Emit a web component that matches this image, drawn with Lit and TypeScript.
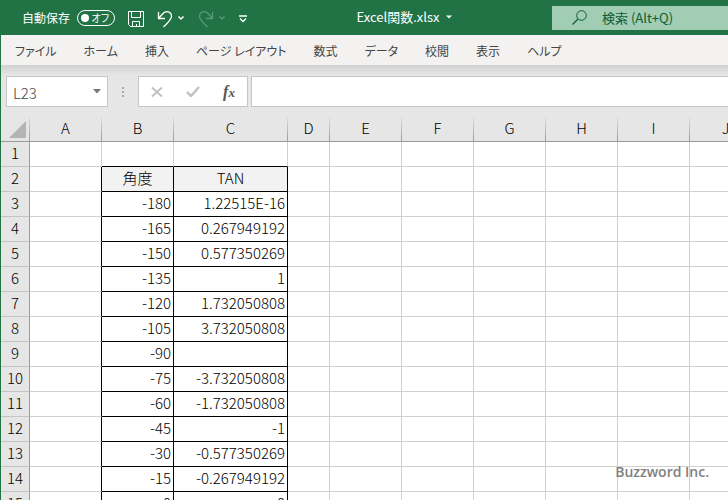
import { LitElement, html, css, nothing } from "lit";
import { customElement } from "lit/decorators.js";
import { classMap } from "lit/directives/class-map.js";

const MENU = ["ファイル", "ホーム", "挿入", "ページ レイアウト", "数式", "データ", "校閲", "表示", "ヘルプ"];
const COLUMNS = ["A", "B", "C", "D", "E", "F", "G", "H", "I", "J"];
const ROWS: [string, string][] = [
  ["", ""],
  ["角度", "TAN"],
  ["-180", "1.22515E-16"],
  ["-165", "0.267949192"],
  ["-150", "0.577350269"],
  ["-135", "1"],
  ["-120", "1.732050808"],
  ["-105", "3.732050808"],
  ["-90", ""],
  ["-75", "-3.732050808"],
  ["-60", "-1.732050808"],
  ["-45", "-1"],
  ["-30", "-0.577350269"],
  ["-15", "-0.267949192"],
  ["0", "0"],
];

const base = css`
  * {
    box-sizing: border-box;
  }
  button,
  input {
    margin: 0;
    padding: 0;
    border: 0;
    background: none;
    color: inherit;
    font: inherit;
    outline: none;
  }
  button {
    display: flex;
    align-items: center;
    justify-content: center;
  }
  svg {
    display: block;
    fill: none;
    stroke: currentColor;
  }
`;

@customElement("title-bar")
class TitleBar extends LitElement {
  static styles = [
    base,
    css`
      :host {
        display: grid;
        grid-template-columns: 256px 1fr 176px;
        align-items: center;
        height: 35px;
        background: #217346;
        color: #fff;
        font-size: 12px;
      }
      .tools {
        display: flex;
        align-items: center;
        padding-left: 22px;
      }
      .tools button {
        padding-top: 2px;
      }
      .autosave {
        display: flex;
        align-items: center;
        gap: 7px;
        margin-right: 13px;
      }
      .pill {
        position: relative;
        display: flex;
        align-items: center;
        justify-content: flex-end;
        width: 38px;
        height: 16px;
        padding-right: 5px;
        border: 1px solid #fff;
        border-radius: 8px;
        font-size: 10px;
        font-feature-settings: "palt";
      }
      .switch {
        position: absolute;
        left: 3px;
        top: 3px;
        width: 8px;
        height: 8px;
        appearance: none;
        border-radius: 4px;
        background: #fff;
      }
      .save,
      .undo,
      .redo {
        margin-right: 13px;
      }
      .redo {
        color: #559a73;
      }
      .name {
        justify-self: center;
        gap: 6px;
        padding-bottom: 2px;
        font-size: 13px;
      }
      .search {
        display: flex;
        align-items: center;
        gap: 15px;
        height: 24px;
        padding-left: 20px;
        background: #a0cdb4;
        color: #0f5c33;
        font-size: 13px;
      }
      .search input {
        flex: 1;
        min-width: 0;
      }
      .search input::placeholder {
        color: inherit;
        opacity: 1;
      }
    `,
  ];

  render() {
    return html`
      <div class="tools">
        <label class="autosave">
          自動保存
          <span class="pill"><input class="switch" type="checkbox" role="switch" />オフ</span>
        </label>
        <button class="save" aria-label="上書き保存">
          <svg width="16" height="16" viewBox="0 0 16 16">
            <path d="M.5.5h15v15h-13l-2-2zM3.500.5v6h9v-6M4.500 15.500v-5h7v5M8.500 13v2.500" />
          </svg>
        </button>
        <button class="undo" aria-label="元に戻す">
          <svg width="28" height="18" viewBox="0 0 28 18">
            <path d="M1.500 2v6.500H8M1.500 8.500 5 4.500C9-.5 14.500 2 14.500 6.500c0 3-2 4.500-8 10.500" stroke-width="1.300" />
            <path d="M21.500 6.500 24 9l2.500-2.500" stroke-width="1.500" />
          </svg>
        </button>
        <button class="redo" aria-label="やり直し">
          <svg width="28" height="18" viewBox="0 0 28 18">
            <path d="M14.500 2v6.500H8M14.500 8.500 11 4.500C7-.5 1.500 2 1.500 6.500c0 3 2 4.500 8 10.500" stroke-width="1.300" />
            <path d="M21.500 6.500 24 9l2.500-2.500" stroke-width="1.500" />
          </svg>
        </button>
        <button aria-label="クイック アクセス ツール バーのユーザー設定">
          <svg width="8" height="8" viewBox="0 0 8 8">
            <path d="M0 1h8M1 3.500 4 6.500l3-3" stroke-width="1.300" />
          </svg>
        </button>
      </div>
      <button class="name">
        Excel関数.xlsx
        <svg width="6" height="4" viewBox="0 0 6 4"><path d="M0 .5h6L3 3.500z" fill="currentColor" stroke="none" /></svg>
      </button>
      <label class="search">
        <svg width="15" height="15" viewBox="0 0 15 15">
          <circle cx="9.500" cy="5.500" r="4.800" />
          <path d="M6 9 .5 14.500" stroke-width="1.200" />
        </svg>
        <input type="text" aria-label="検索" placeholder="検索 (Alt+Q)" />
      </label>
    `;
  }
}

@customElement("ribbon-tabs")
class RibbonTabs extends LitElement {
  static styles = [
    base,
    css`
      :host {
        display: block;
        background: #f3f2f1;
        color: #444;
      }
      .tabs {
        display: flex;
        gap: 27px;
        height: 30px;
        padding-left: 14px;
        font-size: 12px;
        font-feature-settings: "palt";
      }
      button {
        flex: none;
        white-space: nowrap;
      }
    `,
  ];

  render() {
    return html`<nav class="tabs">${MENU.map((label) => html`<button>${label}</button>`)}</nav>`;
  }
}

@customElement("formula-bar")
class FormulaBar extends LitElement {
  static styles = [
    base,
    css`
      :host {
        display: flex;
        height: 52px;
        padding: 11px 0 10px 5px;
        background: linear-gradient(#d2d0d0, #e6e6e6 10px);
        color: #444;
      }
      .box {
        display: flex;
        align-items: center;
        border: 1px solid #c6c6c6;
        background: #fff;
      }
      .cell {
        width: 102px;
        padding: 0 6px;
      }
      .cell input {
        flex: 1;
        min-width: 0;
        padding-top: 2px;
        font-size: 15px;
        font-weight: 300;
      }
      .grip {
        display: grid;
        place-items: center;
        width: 30px;
        color: #aaa;
      }
      .actions {
        width: 110px;
        margin-right: 3px;
      }
      .actions button {
        flex: 1;
        color: #c2c2c2;
      }
      .actions .fx {
        color: #555;
        font: italic bold 16px "Liberation Serif", serif;
      }
      .fx small {
        padding-top: 3px;
        font-size: 13px;
      }
      .formula {
        flex: 1;
        min-width: 0;
        padding: 0 6px;
        border-right: 0;
      }
    `,
  ];

  render() {
    return html`
      <div class="box cell">
        <input type="text" aria-label="名前ボックス" value="L23" />
        <button aria-label="名前の一覧">
          <svg width="8" height="5" viewBox="0 0 8 5"><path d="M0 0h8L4 4.500z" fill="#777" stroke="none" /></svg>
        </button>
      </div>
      <div class="grip">
        <svg width="2" height="10" viewBox="0 0 2 10"><path d="M1 0v2M1 4v2M1 8v2" stroke-width="2" /></svg>
      </div>
      <div class="box actions">
        <button aria-label="キャンセル">
          <svg width="12" height="10" viewBox="0 0 12 10"><path d="m1 .5 10 9M11 .5l-10 9" stroke-width="2" /></svg>
        </button>
        <button aria-label="入力">
          <svg width="14" height="11" viewBox="0 0 14 11"><path d="m1 6 4 4 8-9" stroke-width="2.500" /></svg>
        </button>
        <button class="fx" aria-label="関数の挿入">f<small>x</small></button>
      </div>
      <input class="box formula" type="text" aria-label="数式バー" />
    `;
  }
}

@customElement("sheet-grid")
class SheetGrid extends LitElement {
  static styles = [
    base,
    css`
      :host {
        display: block;
        overflow: hidden;
        background: #fff;
      }
      table {
        width: 735px;
        min-width: 100%;
        table-layout: fixed;
        border-collapse: separate;
        border-spacing: 0;
        color: #000;
        font-size: 15px;
        line-height: 22px;
      }
      .head-col {
        width: 29px;
      }
      .std {
        width: 72px;
      }
      .wide {
        width: 114px;
      }
      .narrow {
        width: 42px;
      }
      th,
      td {
        height: 25px;
        padding: 0 2px 2px;
        border-right: 1px solid #d0d0d0;
        border-bottom: 1px solid #d0d0d0;
        font-weight: 300;
        white-space: nowrap;
      }
      td {
        text-align: right;
      }
      thead th {
        border-right: 1px solid;
        border-bottom: 1px solid #9b9b9b;
        border-image: linear-gradient(#e0e0e0, #999) 1;
        background: #e6e6e6;
      }
      thead .corner {
        padding: 0 3px 3px 0;
        vertical-align: bottom;
      }
      .corner svg {
        margin-left: auto;
      }
      tbody th {
        padding: 0 0 2px;
        border-right-color: #9b9b9b;
        border-bottom-color: #c4c4c4;
        background: #e6e6e6;
      }
      td.line-right {
        border-right-color: #000;
      }
      td.line-bottom {
        border-bottom-color: #000;
      }
      td.title {
        background: #f2f2f2;
        text-align: center;
      }
    `,
  ];

  private cell(row: number, col: number) {
    const inTable = col === 1 || col === 2;
    const classes = {
      "line-right": row >= 1 && col <= 2,
      "line-bottom": inTable,
      title: inTable && row === 1,
    };
    return html`<td class=${classMap(classes)}>${inTable ? ROWS[row][col - 1] : nothing}</td>`;
  }

  render() {
    return html`
      <table>
        <colgroup>
          <col class="head-col" />
          <col class="std" span="2" />
          <col class="wide" />
          <col class="narrow" />
          <col class="std" span="6" />
        </colgroup>
        <thead>
          <tr>
            <th class="corner" aria-label="すべて選択">
              <svg width="17" height="17" viewBox="0 0 17 17"><path d="M17 0v17H0z" fill="#b4b4b4" stroke="none" /></svg>
            </th>
            ${COLUMNS.map((name) => html`<th scope="col">${name}</th>`)}
          </tr>
        </thead>
        <tbody>
          ${ROWS.map(
            (_, row) => html`<tr>
              <th scope="row">${row + 1}</th>
              ${COLUMNS.map((_name, col) => this.cell(row, col))}
            </tr>`
          )}
        </tbody>
      </table>
    `;
  }
}

@customElement("app-root")
class AppRoot extends LitElement {
  static styles = [
    base,
    css`
      :host {
        position: relative;
        display: flex;
        flex-direction: column;
        height: 100vh;
        overflow: hidden;
        font-family: "Noto Sans CJK JP", "Noto Sans", sans-serif;
      }
      .body {
        display: flex;
        flex: 1;
        flex-direction: column;
        min-height: 0;
        border-left: 1px solid #217346;
      }
      .sheet {
        flex: 1;
        min-height: 0;
      }
      .credit {
        position: absolute;
        right: 19px;
        bottom: 18px;
        color: #808080;
        font: 600 14px/20px "Open Sans", sans-serif;
      }
    `,
  ];

  render() {
    return html`
      <title-bar></title-bar>
      <div class="body">
        <ribbon-tabs></ribbon-tabs>
        <formula-bar></formula-bar>
        <sheet-grid class="sheet"></sheet-grid>
      </div>
      <div class="credit">Buzzword Inc.</div>
    `;
  }
}
